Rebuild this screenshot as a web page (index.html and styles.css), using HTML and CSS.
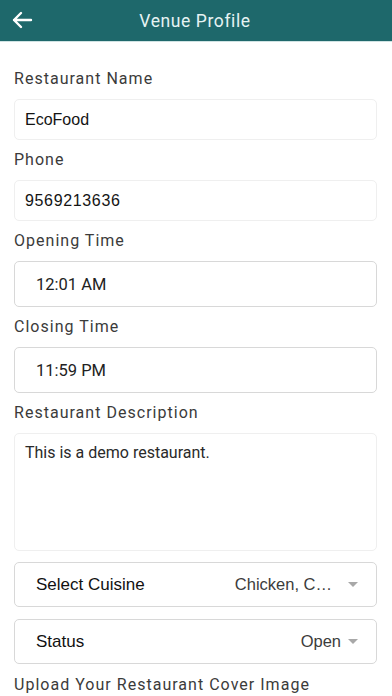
FILE: index.html
```html
<!DOCTYPE html>
<html>
<head>
<meta charset="utf-8">
<link rel="stylesheet" href="styles.css">
</head>
<body>
<header class="topbar">
  <svg class="back" width="22" height="18" viewBox="0 0 22 18"><path d="M20 9H3M10 2L3 9l7 7" fill="none" stroke="#ffffff" stroke-width="2.4" stroke-linecap="round" stroke-linejoin="round"/></svg>
  <h1 class="title">Venue Profile</h1>
</header>
<main class="form">
  <div class="label">Restaurant Name</div>
  <div class="field light">EcoFood</div>
  <div class="label">Phone</div>
  <div class="field light digits">9569213636</div>
  <div class="label">Opening Time</div>
  <div class="field time">12:01 AM</div>
  <div class="label">Closing Time</div>
  <div class="field time">11:59 PM</div>
  <div class="label">Restaurant Description</div>
  <div class="field light area">This is a demo restaurant.</div>
  <div class="select first">
    <span class="sel-name">Select Cuisine</span>
    <span class="sel-val">Chicken, C…</span>
    <span class="caret"></span>
  </div>
  <div class="select">
    <span class="sel-name">Status</span>
    <span class="sel-val">Open</span>
    <span class="caret tight"></span>
  </div>
  <div class="label upload">Upload Your Restaurant Cover Image</div>
</main>
</body>
</html>
```
FILE: styles.css
```css
html, body { margin: 0; padding: 0; background: #ffffff; }
body { width: 392px; height: 696px; overflow: hidden; font-family: Roboto, "Noto Sans", sans-serif; }

.topbar {
  height: 41px;
  background: #1e686b;
  display: flex;
  align-items: center;
  justify-content: center;
  position: relative;
  box-shadow: 0 1px 0 #cfe3e3;
}
.back { position: absolute; left: 11px; top: 11px; }
.title {
  margin: 0;
  font-weight: 400;
  font-size: 17.5px;
  letter-spacing: 0.6px;
  color: #e6f3f3;
  margin-left: -2px;
}

.form {
  display: flex;
  flex-direction: column;
  padding: 28px 15px 0 14px;
}
.label {
  height: 20px;
  line-height: 20px;
  font-size: 16px;
  letter-spacing: 1.02px;
  color: #3b3b3b;
  margin-bottom: 10px;
}
.field {
  box-sizing: border-box;
  border-radius: 5px;
  border: 1px solid #d8d8d8;
  display: flex;
  align-items: center;
  font-family: "Liberation Sans", Arial, sans-serif;
  font-size: 16px;
  color: #141414;
  margin-bottom: 10px;
}
.field.light {
  border-color: #efefef;
  height: 41px;
  padding-left: 10px;
}
.field.digits { letter-spacing: 0.65px; }
.field.time {
  height: 46px;
  padding-left: 21px;
  font-family: Roboto, sans-serif;
  font-size: 16.5px;
  color: #222;
}
.field.area {
  height: 118px;
  align-items: flex-start;
  padding-top: 9px;
  font-family: Roboto, sans-serif;
  font-size: 16px;
  color: #2a2a2a;
}
.select {
  box-sizing: border-box;
  height: 45px;
  border: 1px solid #d8d8d8;
  border-radius: 5px;
  display: flex;
  align-items: center;
  padding: 0 18px 0 21px;
  margin-bottom: 12px;
  font-family: "Liberation Sans", Arial, sans-serif;
  font-size: 17px;
}
.select.first { margin-top: 1px; }
.sel-name { color: #111; flex: 1; }
.sel-val { color: #3c3c3c; font-size: 16.5px; }
.caret {
  width: 0; height: 0;
  border-left: 5px solid transparent;
  border-right: 5px solid transparent;
  border-top: 5px solid #a8a8a8;
  margin-left: 16px;
}
.caret.tight { margin-left: 7px; }
.upload { margin-top: -1px; }
```
